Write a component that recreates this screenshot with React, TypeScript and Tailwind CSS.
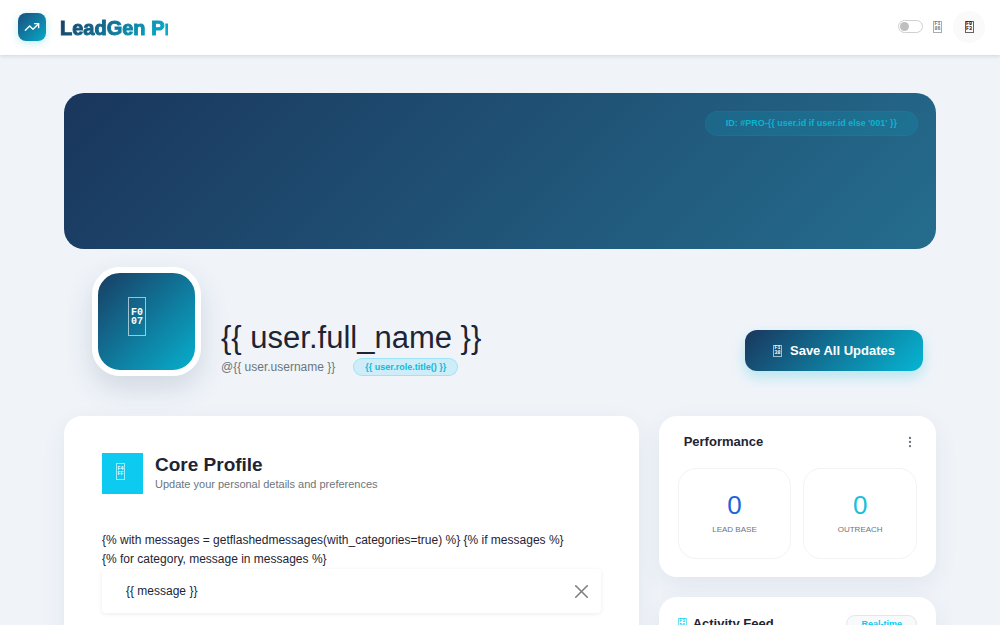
import React, { useState } from "react";
import { MoreVertical, TrendingUp, X } from "lucide-react";

const stats = [
  { label: "LEAD BASE", value: "0", color: "text-[#1a66d9]" },
  { label: "OUTREACH", value: "0", color: "text-[#18c0dc]" },
];

// Boxed hex code of an icon font character
const Glyph = ({ code, className }: { code: string; className: string }) => (
  <span
    aria-hidden="true"
    className={`flex shrink-0 flex-col items-center justify-center border border-current/60 font-['Liberation_Mono',monospace] font-bold ${className}`}
  >
    <span>{code.slice(0, 2)}</span>
    <span>{code.slice(2)}</span>
  </span>
);

const Header = () => {
  const [isDarkMode, setIsDarkMode] = useState(false);

  return (
    <header className="flex h-[55px] items-center justify-between bg-white pr-[15px] pb-0.5 pl-[18px] shadow-[0_1px_4px_rgba(15,23,42,0.14)]">
      <a href="#" className="flex items-center gap-[14px]">
        <span className="flex size-7 items-center justify-center rounded-lg bg-linear-135/srgb from-[#1b4f7e] to-[#06a9c6] text-white shadow-[0_2px_8px_rgba(6,182,212,0.25)]">
          <TrendingUp size={16} strokeWidth={2} />
        </span>
        <span className="w-[108px] overflow-hidden bg-linear-135/srgb from-[#1a365d] to-[#06b6d4] bg-clip-text pt-0.5 text-[20px] leading-7 font-bold whitespace-nowrap text-transparent [-webkit-text-stroke:1px_transparent]">
          LeadGen Pro
        </span>
      </a>

      <div className="flex items-center">
        <input
          type="checkbox"
          role="switch"
          aria-label="Dark mode"
          checked={isDarkMode}
          onChange={() => setIsDarkMode(!isDarkMode)}
          className="h-[13px] w-[25px] appearance-none rounded-full border border-[#d0d0d0] bg-white before:mt-px before:ml-px before:block before:size-[9px] before:rounded-full before:bg-[#bfbfbf] checked:before:ml-[13px]"
        />
        <Glyph
          code="F186"
          className="ml-[10px] h-3 w-[9px] text-[5px] leading-[5px] text-[#6c757d]"
        />
        <button
          aria-label="Notifications"
          className="ml-[11px] flex size-8 items-center justify-center rounded-full bg-[#fafafb] text-black"
        >
          <Glyph code="F0F3" className="h-3 w-[9px] text-[5px] leading-[5px]" />
        </button>
      </div>
    </header>
  );
};

const ProfileCard = () => {
  const [showMessage, setShowMessage] = useState(true);

  return (
    <section className="col-span-2 rounded-[18px] bg-white px-[38px] py-[37px] shadow-[0_8px_24px_rgba(26,54,93,0.07)]">
      <div className="flex items-start gap-3">
        <span className="flex size-[41px] items-center justify-center bg-[#0dcaf0] pr-1 pb-1 text-white">
          <Glyph
            code="F4FF"
            className="h-[17px] w-[9px] text-[5px] leading-[5px]"
          />
        </span>
        <div>
          <h2 className="text-[19px] leading-6 font-bold">Core Profile</h2>
          <p className="text-[11px] leading-[14px] text-[#6c757d]">
            Update your personal details and preferences
          </p>
        </div>
      </div>

      <p className="mt-[37px] text-[12px] leading-[19px]">
        {
          "{% with messages = getflashedmessages(with_categories=true) %} {% if messages %}"
        }
        <br />
        {"{% for category, message in messages %}"}
      </p>
      {showMessage && (
        <div className="flex h-11 items-center justify-between rounded-sm pr-2 pl-6 text-[12px] shadow-[0_1px_4px_rgba(0,0,0,0.08)]">
          <span>{"{{ message }}"}</span>
          <button
            aria-label="Close"
            onClick={() => setShowMessage(false)}
            className="text-[#7f7f7f]"
          >
            <X size={23} strokeWidth={1.7} />
          </button>
        </div>
      )}
    </section>
  );
};

const PerformanceCard = () => (
  <section className="rounded-[18px] bg-white px-[19px] pt-4 pb-[18px] shadow-[0_8px_24px_rgba(26,54,93,0.07)]">
    <div className="flex items-center justify-between pl-[6px]">
      <h2 className="text-[13px] leading-5 font-bold">Performance</h2>
      <button aria-label="Performance options" className="text-[#6c757d]">
        <MoreVertical size={14} />
      </button>
    </div>
    <div className="mt-4 grid grid-cols-2 gap-3">
      {stats.map((stat) => (
        <div
          key={stat.label}
          className="flex h-[91px] flex-col items-center justify-center gap-[3px] rounded-[18px] border border-[#f1f3f5]"
        >
          <span className={`text-[26px] leading-[30px] ${stat.color}`}>
            {stat.value}
          </span>
          <span className="text-[8px] leading-[14px] text-[#6c757d]">
            {stat.label}
          </span>
        </div>
      ))}
    </div>
  </section>
);

const ActivityCard = () => (
  <section className="min-h-40 rounded-[18px] bg-white px-[19px] pt-[17px] shadow-[0_8px_24px_rgba(26,54,93,0.07)]">
    <div className="flex items-center justify-between">
      <h2 className="flex items-center gap-[6px] text-[13px] leading-5 font-bold">
        <Glyph
          code="F1DA"
          className="h-3 w-[9px] text-[5px] leading-[5px] text-[#0dcaf0]"
        />
        Activity Feed
      </h2>
      <span className="rounded-full border border-[#e3e6ea] bg-[#f8f9fa] px-[14px] text-[9px] leading-4 font-bold text-[#0dcaf0]">
        Real-time
      </span>
    </div>
  </section>
);

const App = () => {
  return (
    <div className="h-screen overflow-hidden bg-[#f0f4f9] font-['Liberation_Sans',Arial,sans-serif] text-[#1e2433]">
      <Header />

      <main className="px-16 pt-[38px]">
        {/* Cover */}
        <div className="flex h-[156px] items-start justify-end rounded-[20px] bg-linear-135/srgb from-[#1a365d] to-[#256d8d] p-[18px]">
          <span className="rounded-full border border-[#06b6d4]/10 bg-[#06b6d4]/15 px-5 text-[9px] leading-[23px] font-bold text-[#0bb4cf]">
            {"ID: #PRO-{{ user.id if user.id else '001' }}"}
          </span>
        </div>

        {/* Identity */}
        <div className="mt-[18px] flex items-end justify-between pr-[13px] pl-7">
          <div className="flex items-end gap-5">
            <div className="size-[109px] rounded-[28px] border-6 border-white bg-linear-135/srgb from-[#1a365d] to-[#06b6d4] bg-origin-border pt-6 pl-[30px] text-white shadow-[0_12px_28px_rgba(26,54,93,0.15)]">
              <Glyph
                code="F007"
                className="h-[39px] w-[18px] text-[10px] leading-[9px]"
              />
            </div>
            <div>
              <h1 className="mb-0.5 text-[31px] leading-[37px]">
                {"{{ user.full_name }}"}
              </h1>
              <div className="flex items-center gap-[18px]">
                <span className="text-[12px] leading-[18px] text-[#6c757d]">
                  {"@{{ user.username }}"}
                </span>
                <span className="rounded-full border border-[#0dcaf0]/25 bg-[#0dcaf0]/15 px-[11px] text-[9px] leading-4 font-bold text-[#0dbbd8]">
                  {"{{ user.role.title() }}"}
                </span>
              </div>
            </div>
          </div>
          <button className="mb-[5px] flex h-[41px] items-center gap-2 rounded-xl bg-linear-135/srgb from-[#1a365d] to-[#06b6d4] px-7 text-[13px] font-bold text-white shadow-[0_6px_14px_rgba(6,182,212,0.25)]">
            <Glyph
              code="F138"
              className="h-3 w-[9px] text-[5px] leading-[5px]"
            />
            Save All Updates
          </button>
        </div>

        {/* Cards */}
        <div className="mt-10 grid grid-cols-3 items-start gap-5">
          <ProfileCard />
          <div className="flex flex-col gap-5">
            <PerformanceCard />
            <ActivityCard />
          </div>
        </div>
      </main>
    </div>
  );
};

export default App;
